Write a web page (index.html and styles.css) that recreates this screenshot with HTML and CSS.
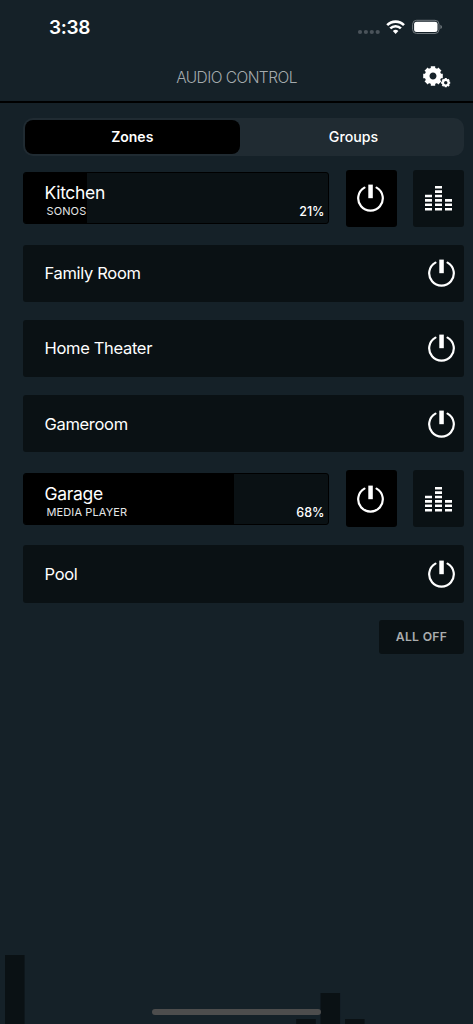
FILE: index.html
```html
<!DOCTYPE html>
<html lang="en">
<head>
<meta charset="utf-8">
<title>Audio Control</title>
<link rel="stylesheet" href="styles.css">
</head>
<body>
<svg class="defs" width="0" height="0" aria-hidden="true">
  <symbol id="power" viewBox="0 0 28 28">
    <path d="M7.4 3.6A12.3 12.3 0 1 0 19.6 3.6" fill="none" stroke="#fff" stroke-width="2.2" stroke-linecap="round"/>
    <rect x="11.3" y=".6" width="4.5" height="13.6" fill="#fff"/>
  </symbol>
  <symbol id="levels" viewBox="0 0 28 28">
    <path d="M0 12h7M0 16.4h7M0 20.8h7M0 25.2h7M10 3.2h7M10 7.6h7M10 12h7M10 16.4h7M10 20.8h7M10 25.2h7M20 16.4h7M20 20.8h7M20 25.2h7" stroke="#fff" stroke-width="2.6"/>
  </symbol>
  <symbol id="gear" viewBox="-10 -10 20 20">
    <circle r="5.9" fill="none" stroke="#fff" stroke-width="4.8"/>
    <g stroke="#fff" stroke-width="4.4">
      <path d="M0-9.8V-7M0 9.8V7M-9.8 0H-7M9.8 0H7"/>
      <path d="M0-9.8V-7M0 9.8V7M-9.8 0H-7M9.8 0H7" transform="rotate(45)"/>
    </g>
  </symbol>
</svg>
<div class="screen">
  <div class="status">
    <span class="time">3:38</span>
    <svg class="indicators" width="86" height="20" viewBox="0 0 86 20">
      <g fill="#4a535a"><circle cx="4" cy="15" r="2.1"/><circle cx="9.9" cy="15" r="2.1"/><circle cx="15.8" cy="15" r="2.1"/><circle cx="21.7" cy="15" r="2.1"/></g>
      <g fill="none" stroke="#fff" stroke-width="2.6"><path d="M31.2 8.1a11.8 11.8 0 0 1 16.8 0"/><path d="M34.3 11.4a7.5 7.5 0 0 1 10.6 0"/></g>
      <path d="M39.6 16.9L36.8 14a4.1 4.1 0 0 1 5.6 0z" fill="#fff"/>
      <rect x="56.6" y="3.3" width="26.4" height="13.2" rx="4" fill="none" stroke="#727a7f"/>
      <rect x="58.1" y="4.8" width="23.4" height="10.2" rx="2.5" fill="#fff"/>
      <path d="M84.4 7.8q1.6.7 1.6 2.1T84.4 12z" fill="#727a7f"/>
    </svg>
  </div>
  <header class="header">
    <h1 class="title">AUDIO CONTROL</h1>
    <span class="settings"><svg class="gear-large"><use href="#gear"/></svg><svg class="gear-small"><use href="#gear"/></svg></span>
  </header>
  <main class="content">
    <div class="tabs"><div class="tab selected">Zones</div><div class="tab">Groups</div></div>
    <div class="zones">
      <div class="zone">
        <div class="slider"><div class="fill" style="width:21%"></div><div class="labels"><span class="name">Kitchen</span><span class="source">SONOS</span></div><span class="percent">21%</span></div>
        <div class="button on"><svg class="icon"><use href="#power"/></svg></div>
        <div class="button"><svg class="icon"><use href="#levels"/></svg></div>
      </div>
      <div class="zone off"><span class="name">Family Room</span><svg class="icon"><use href="#power"/></svg></div>
      <div class="zone off"><span class="name">Home Theater</span><svg class="icon"><use href="#power"/></svg></div>
      <div class="zone off"><span class="name">Gameroom</span><svg class="icon"><use href="#power"/></svg></div>
      <div class="zone">
        <div class="slider"><div class="fill" style="width:69%"></div><div class="labels"><span class="name">Garage</span><span class="source player">MEDIA PLAYER</span></div><span class="percent">68%</span></div>
        <div class="button on"><svg class="icon"><use href="#power"/></svg></div>
        <div class="button"><svg class="icon"><use href="#levels"/></svg></div>
      </div>
      <div class="zone off"><span class="name">Pool</span><svg class="icon"><use href="#power"/></svg></div>
    </div>
    <div class="all-off">ALL OFF</div>
  </main>
  <svg class="backdrop" width="473" height="74" viewBox="0 0 473 74"><path d="M5 5h19.6v69H5zM296.2 69h19.6v5h-19.6zM320.5 43h19.6v31h-19.6zM345 69h19.6v5H345z" fill="#0a1114"/></svg>
  <div class="home-indicator"></div>
</div>
</body>
</html>
```
FILE: styles.css
```css
* { box-sizing: border-box; }
body { margin: 0; background: #152128; font-family: Inter, "Liberation Sans", sans-serif; color: #fff; }
.defs { position: absolute; }
svg { display: block; flex: none; }
.screen { position: relative; width: 473px; height: 1024px; overflow: hidden; background: #152128; }
.status { height: 54px; padding: 17px 31px 0 49px; display: flex; justify-content: space-between; }
.time { font-size: 19px; line-height: 21px; font-weight: 600; letter-spacing: -.35px; }
.header { height: 49px; border-bottom: 2px solid #000; display: grid; grid-template-columns: 60px 1fr 60px; align-items: center; }
.title { grid-column: 2; margin: 0; text-align: center; font-size: 15.5px; line-height: 20px; font-weight: 300; letter-spacing: -.55px; color: #a4aaad; }
.settings { display: flex; padding: 0 0 2px 9.5px; }
.gear-large { width: 20px; height: 20px; }
.gear-small { width: 9.5px; height: 9.5px; margin: 12.5px 0 0 -1.2px; }
.content { padding: 14.5px 9px 0 22.5px; }
.tabs { display: flex; height: 38.5px; padding: 2px; border-radius: 10px; background: #202b32; }
.tab { flex: 1; display: flex; align-items: center; justify-content: center; padding-left: 5px; border-radius: 8px; font-size: 14.2px; font-weight: 500; }
.selected { flex: 0 0 215.5px; padding-left: 0; background: #000; font-weight: 600; font-size: 14px; }
.zones { display: flex; flex-direction: column; gap: 18px; margin-top: 13.5px; }
.zone { height: 57.2px; display: flex; align-items: center; }
.off { padding: 0 8px 0 22px; justify-content: space-between; background: #0a1114; border-radius: 3px; }
.name { font-size: 16.5px; line-height: 20px; letter-spacing: -.32px; }
.icon { width: 28px; height: 28px; }
.slider { width: 306.5px; height: 51.5px; border: 1px solid #000; border-radius: 3px; background: #0a1114; display: grid; grid-template-columns: 1fr auto; overflow: hidden; }
.fill { grid-area: 1 / 1 / 2 / 3; background: #000; }
.labels { grid-area: 1 / 1; display: flex; flex-direction: column; padding: 10px 0 0 21px; }
.labels .name { font-size: 17.5px; }
.source { margin: 1px 0 0 2px; font-size: 11px; line-height: 14px; letter-spacing: .12px; color: #e4e6e7; }
.percent { grid-area: 1 / 2; align-self: end; padding: 0 3.5px 3px 0; font-size: 12.5px; line-height: 16px; font-weight: 500; }
.button { width: 51px; height: 57.2px; margin-left: 16.5px; display: flex; align-items: center; justify-content: center; background: #0a1114; border-radius: 3px; }
.on { background: #000; }
.all-off { width: 85px; height: 33.5px; margin: 17.5px 0 0 auto; display: flex; align-items: center; justify-content: center; border-radius: 3px; background: #0a1114; color: #aaadae; font-size: 12.2px; font-weight: 600; letter-spacing: .3px; }
.backdrop { position: absolute; left: 0; bottom: 0; }
.home-indicator { position: absolute; left: 152px; bottom: 9px; width: 169px; height: 6px; border-radius: 3px; background: #4d4d4d; }
```
